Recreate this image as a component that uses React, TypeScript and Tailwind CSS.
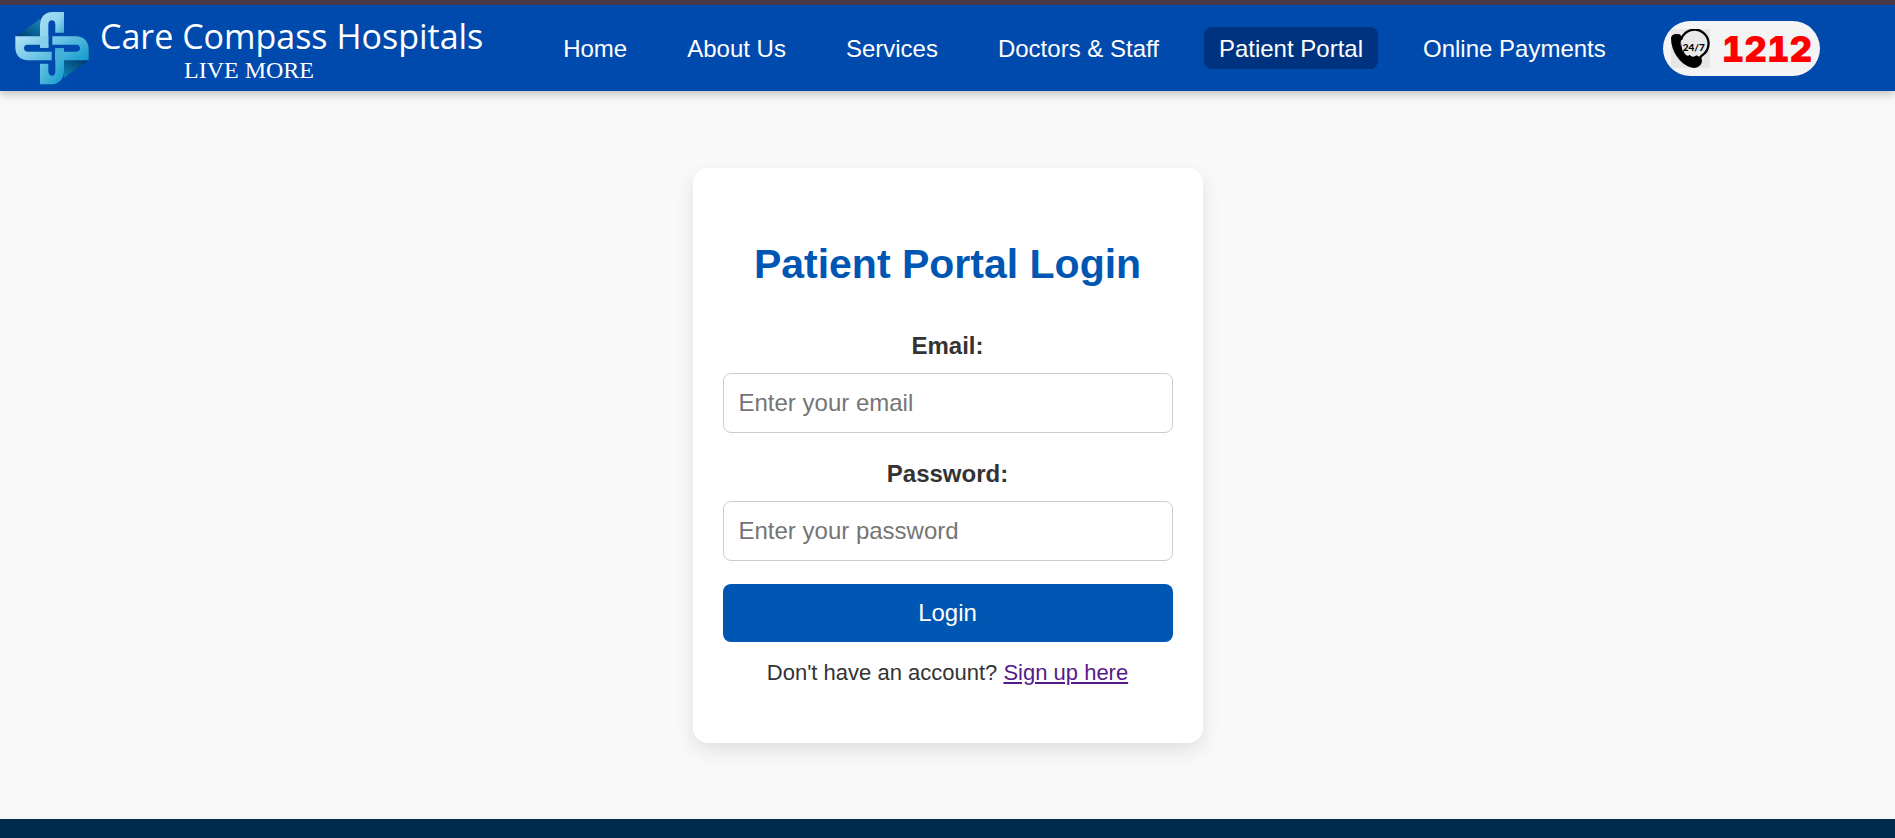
const links = ['Home', 'About Us', 'Services', 'Doctors & Staff', 'Patient Portal', 'Online Payments'];
const activeLink = 'Patient Portal';

function Logo() {
  return (
    <svg viewBox="36 21 240 240" className="size-20 shrink-0" aria-hidden="true">
      <defs>
        <linearGradient id="light" x1="0" y1="0" x2="1" y2="1">
          <stop offset="0" stopColor="#b4e3f5" />
          <stop offset="1" stopColor="#4fb9df" />
        </linearGradient>
        <linearGradient id="top" x1="0" y1="0" x2="1" y2="1">
          <stop offset="0" stopColor="#a9dff3" />
          <stop offset="0.5" stopColor="#8fd3ee" />
          <stop offset="1" stopColor="#0c8fc4" />
        </linearGradient>
        <linearGradient id="deep" x1="0" y1="0" x2="1" y2="1">
          <stop offset="0" stopColor="#7fcdea" />
          <stop offset="1" stopColor="#0f9acb" />
        </linearGradient>
        <linearGradient id="foldA" x1="0" y1="1" x2="1" y2="0">
          <stop offset="0" stopColor="#013a72" />
          <stop offset="1" stopColor="#1487b8" />
        </linearGradient>
        <linearGradient id="foldB" x1="0" y1="1" x2="1" y2="0">
          <stop offset="0" stopColor="#0b84b6" />
          <stop offset="1" stopColor="#013468" />
        </linearGradient>
      </defs>
      <path d="M77 30V255M238 30V255M45 80H268M45 187H268M45 240H268" stroke="#0045a3" strokeWidth="2" />
      <path d="M46 106L120 54V106Z" fill="url(#foldA)" />
      <path d="M266 178L192 230V178Z" fill="url(#foldB)" />
      <path d="M120 140V72Q121 35 158 33H192V95H166V70Q165 58 156 58Q146 58 145 70V140Z" fill="url(#top)" />
      <path d="M166 142H192V211Q190 248 155 250H120V188H145V212Q147 224 156 224Q165 224 166 212Z" fill="url(#deep)" />
      <path d="M46 106H120V140H145V131H82Q72 132 72 141Q72 151 82 152H155V178H84Q48 176 46 142Z" fill="url(#light)" />
      <path d="M120 104V140H145V104Z" fill="#86d0ec" />
      <path d="M157 106H228Q264 108 266 143V178H166V152H230Q240 151 240 141Q239 132 230 131H157Z" fill="url(#deep)" />
      <path d="M166 142H192V178H166Z" fill="#43b0d9" />
    </svg>
  );
}

function SupportIcon() {
  return (
    <svg viewBox="60 60 117 117" className="size-[39px] shrink-0" aria-hidden="true">
      <path d="M60 60H177V177H60Z" fill="#e6e6e6" />
      <path
        d="M60 88Q61 76 74 75L86 76Q95 82 96 94L90 101Q90 114 93 122Q99 138 118 148Q124 143 134 147L150 146Q156 154 152 162Q145 176 130 177Q112 175 95 162Q74 144 65 118Q60 104 60 88Z"
        fill="#000"
      />
      <circle cx="131" cy="104" r="42" fill="#e9e9e9" />
      <path d="M91 90A42 42 0 1 1 152 140L145 150" fill="none" stroke="#000" strokeWidth="7" strokeLinecap="round" />
      <path
        d="M90 102L88 122L98 138L112 148L128 150L148 148L150 141Q143 145 137 139Q130 144 125 143Q119 141 116 137Q112 142 106 139Q101 136 99 128L94 124Z"
        fill="#000"
      />
      <text x="95" y="125" fontSize="30" fontWeight="900" fill="#000" className="font-['Lato',sans-serif]">
        24/7
      </text>
    </svg>
  );
}

function Field({ id, label, type, placeholder }: { id: string; label: string; type: string; placeholder: string }) {
  return (
    <div className="mb-[27px] flex flex-col gap-[13px]">
      <label htmlFor={id} className="text-center text-2xl leading-7 font-bold">
        {label}
      </label>
      <input
        id={id}
        type={type}
        placeholder={placeholder}
        className="h-15 w-full rounded-lg border border-[#cccccc] bg-white px-[15px] text-2xl placeholder:text-[#757575]"
      />
    </div>
  );
}

export default function App() {
  return (
    <div className="flex min-h-screen flex-col bg-[#f9f9f9] font-['Liberation_Sans',Arial,sans-serif] text-[#333333]">
      <header className="flex min-h-[91px] items-center border-t-5 border-[#4a394a] bg-[#004aad] pr-[75px] pl-3 text-white shadow-[0_4px_8px_rgba(0,0,0,0.2)]">
        <a href="#home" className="flex items-center gap-2">
          <Logo />
          <span className="flex flex-col pt-1">
            <span className="font-['Open_Sans','Noto_Sans',sans-serif] text-[34px] leading-10 whitespace-nowrap">
              Care Compass Hospitals
            </span>
            <span className="pl-21 font-['Liberation_Serif',serif] text-2xl leading-7">LIVE MORE</span>
          </span>
        </a>
        <nav className="ml-auto flex items-center gap-[30px]">
          {links.map((name) => (
            <a
              key={name}
              href="#"
              aria-current={name === activeLink ? 'page' : undefined}
              className={
                name === activeLink
                  ? 'rounded-lg bg-[#00337f] px-[15px] pt-2 pb-1.5 text-2xl leading-7 whitespace-nowrap'
                  : 'rounded-lg px-[15px] pt-2 pb-1.5 text-2xl leading-7 whitespace-nowrap'
              }
            >
              {name}
            </a>
          ))}
        </nav>
        <a
          href="tel:1212"
          className="ml-[42px] flex h-[55px] items-center gap-3 rounded-full bg-[#f4f4f4] px-2 text-[#ff0000]"
        >
          <SupportIcon />
          <span className="pt-0.5 font-['Inter',sans-serif] text-[35px] leading-10 font-black tabular-nums">1212</span>
        </a>
      </header>

      <main className="flex flex-1 items-center justify-center pt-[41px] pb-10">
        <form className="w-full max-w-[510px] rounded-[15px] bg-white px-[30px] pt-18 pb-14 shadow-[0_8px_20px_rgba(0,0,0,0.1)]">
          <h1 className="mb-11 text-center text-[41px] leading-12 font-bold text-[#0056b3]">Patient Portal Login</h1>
          <Field id="email" label="Email:" type="email" placeholder="Enter your email" />
          <Field id="password" label="Password:" type="password" placeholder="Enter your password" />
          <button type="submit" className="-mt-1 h-[58px] w-full rounded-lg bg-[#0056b3] text-2xl text-white">
            Login
          </button>
          <p className="mt-[17px] text-center text-[22px] leading-7">
            Don't have an account?{' '}
            <a href="#signup" className="text-[#551a8b] underline">
              Sign up here
            </a>
          </p>
        </form>
      </main>

      <footer className="h-[19px] bg-[#002b4d]" />
    </div>
  );
}
